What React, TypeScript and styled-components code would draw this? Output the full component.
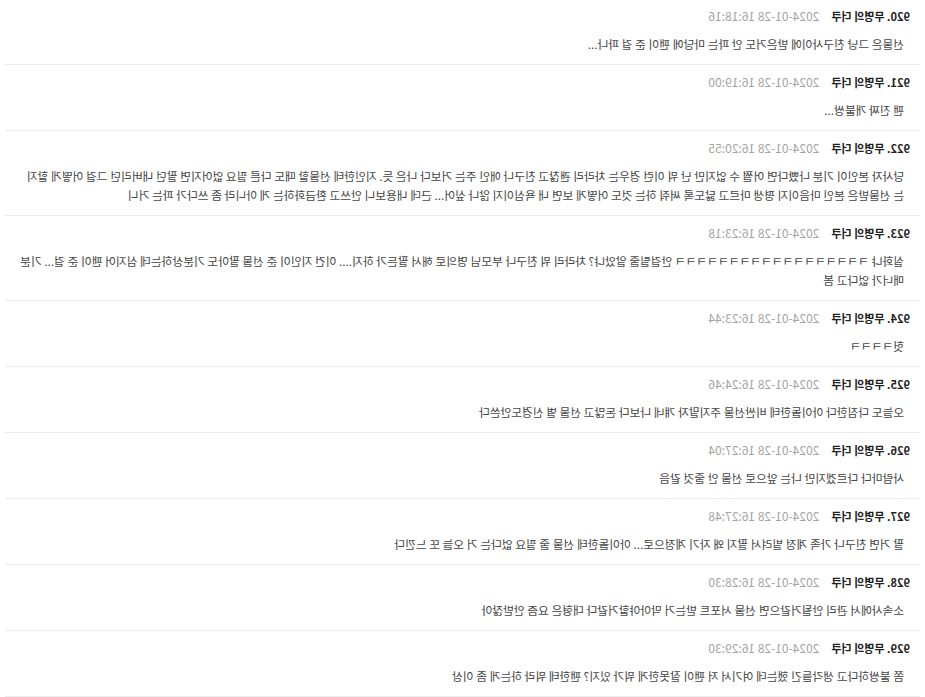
import styled, { createGlobalStyle } from "styled-components";

const GlobalStyle = createGlobalStyle`
  html, body {
    margin: 0;
    padding: 0;
    background: #ffffff;
  }
  body {
    font-family: "Noto Sans CJK KR", "Noto Sans", sans-serif;
  }
`;

const Page = styled.div`
  width: 925px;
  transform: scaleX(-1);
  transform-origin: center;
`;

const List = styled.ul`
  list-style: none;
  margin: -1px 5px 0;
  padding: 0;
`;

const Item = styled.li`
  padding: 8px 12px 11px 10px;
  border-bottom: 1px solid #ececec;
`;

const Header = styled.div`
  display: flex;
  align-items: baseline;
  gap: 12px;
  height: 18px;
  line-height: 18px;
`;

const Author = styled.span`
  font-size: 11px;
  font-weight: 700;
  color: #222;
`;

const Time = styled.span`
  font-size: 12px;
  color: #a3a3a3;
`;

const Body = styled.div`
  margin: 9px 0 0 6px;
  font-size: 11.72px;
  line-height: 19px;
  color: #444;
`;

const comments = [
  { no: 920, time: "2024-01-28 16:18:16", text: "선물은 그냥 친구사이에 받은거도 안 파는 마당에 팬이 준 걸 파나..." },
  { no: 921, time: "2024-01-28 16:19:00", text: "팬 진짜 개불쌍..." },
  {
    no: 922,
    time: "2024-01-28 16:20:55",
    text:
      "당사자 본인이 기분 나빴다면 어쩔 수 없지만 난 뭐 이런 경우는 차라리 괜찮고 친구나 애인 주는 거보다 나은 듯. 지인한테 선물할 때도 다른 필요 없어지면 팔던 내버리던 그걸 어떻게 할지는 선물받은 본인 마음이지 평생 마르고 닳도록 써줘 하는 것도 어떻게 보면 내 욕심이지 않나 싶어... 근데 내용보니 안쓰고 환금화하는 게 아니라 좀 쓰다가 파는 거니",
  },
  {
    no: 923,
    time: "2024-01-28 16:23:18",
    text:
      "실화냐 ㅋㅋㅋㅋㅋㅋㅋㅋㅋㅋㅋㅋㅋㅋㅋㅋㅋㅋ 안걸릴줄 알았냐? 차라리 뭐 친구나 부모님 명의로 해서 팔든가 하지.... 이건 지인이 준 선물 팔아도 기분상하는데 심지어 팬이 준 걸... 기분 매너가 없다고 봄",
  },
  { no: 924, time: "2024-01-28 16:23:44", text: "헛ㅋㅋㅋㅋ" },
  { no: 925, time: "2024-01-28 16:24:46", text: "오늘도 다짐한다 아이돌한테 비싼선물 주지말자 걔네 나보다 돈많고 선물 별 신경도안쓴다" },
  { no: 926, time: "2024-01-28 16:27:04", text: "사람마다 다르겠지만 나는 앞으로 선물 안 줄것 같음" },
  { no: 927, time: "2024-01-28 16:27:48", text: "팔 거면 친구나 가족 계정 빌려서 팔지 왜 자기 계정으로... 아이돌한테 선물 줄 필요 없다는 거 오늘 또 느낀다" },
  { no: 928, time: "2024-01-28 16:28:30", text: "소속사에서 관리 안될거같으면 선물 서포트 받는거 막아야할거같다 대형은 요즘 안받잖아" },
  { no: 929, time: "2024-01-28 16:29:30", text: "쫌 불쌍하다고 생각들긴 했는데 여기서 저 팬이 잘못한게 뭐가 있지? 팬한테 뭐라 하는게 좀 이상" },
];

export default function App() {
  return (
    <Page>
      <GlobalStyle />
      <List>
        {comments.map((c) => (
          <Item key={c.no}>
            <Header>
              <Author>{c.no}. 무명의 더쿠</Author>
              <Time>{c.time}</Time>
            </Header>
            <Body>{c.text}</Body>
          </Item>
        ))}
      </List>
    </Page>
  );
}
